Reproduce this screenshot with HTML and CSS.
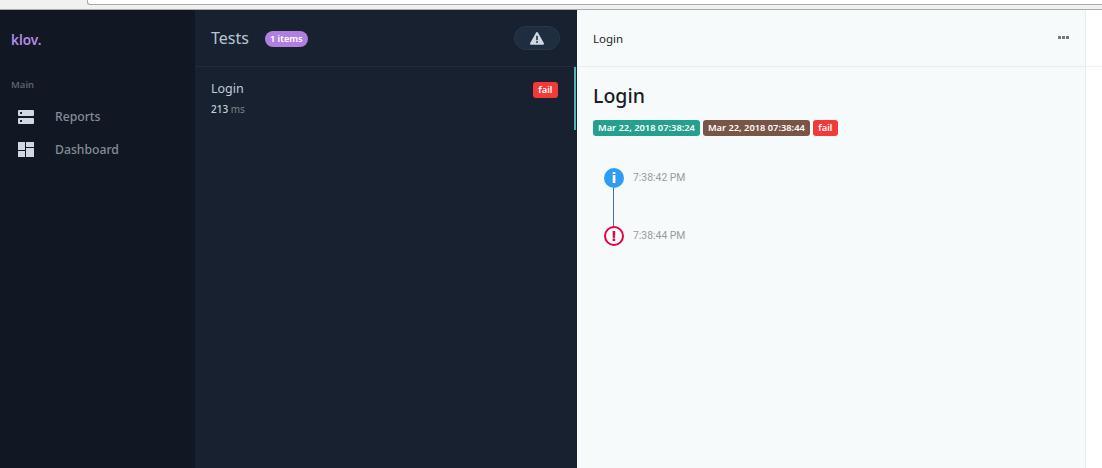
FILE: index.html
```html
<!DOCTYPE html>
<html lang="en">
<head>
    <meta charset="UTF-8">
    <meta name="viewport" content="width=device-width, initial-scale=1.0">
    <title>klov.</title>
    <link rel="stylesheet" href="styles.css">
</head>
<body>
    <div class="browser-bar">
        <div class="address-box"></div>
    </div>
    <div class="app">
        <aside class="sidebar">
            <div class="logo">klov.</div>
            <div class="nav-title">Main</div>
            <a class="nav-item">
                <svg class="nav-icon" width="16" height="14" viewBox="0 0 16 14">
                    <path fill="#cfd8e3" d="M1 0h14a1 1 0 0 1 1 1v4a1 1 0 0 1-1 1H1a1 1 0 0 1-1-1V1a1 1 0 0 1 1-1zm0 8h14a1 1 0 0 1 1 1v4a1 1 0 0 1-1 1H1a1 1 0 0 1-1-1V9a1 1 0 0 1 1-1z"/>
                    <rect x="2" y="2" width="2" height="2" fill="#1b2431"/>
                    <rect x="2" y="10" width="2" height="2" fill="#1b2431"/>
                </svg>
                <span>Reports</span>
            </a>
            <a class="nav-item">
                <svg class="nav-icon" width="16" height="15" viewBox="0 0 16 15">
                    <rect x="0" y="0" width="7" height="8" fill="#cfd8e3"/>
                    <rect x="0" y="9" width="7" height="6" fill="#cfd8e3"/>
                    <rect x="8" y="0" width="8" height="5" fill="#cfd8e3"/>
                    <rect x="8" y="6" width="8" height="9" fill="#cfd8e3"/>
                </svg>
                <span>Dashboard</span>
            </a>
        </aside>

        <section class="tests">
            <header class="tests-head">
                <h2>Tests</h2>
                <span class="count">1 items</span>
                <button class="alert-btn">
                    <svg width="14" height="13" viewBox="0 0 14 13">
                        <path fill="#cfd8e3" d="M7 0c.4 0 .7.2.9.5l5.900 10.600c.4.7-.1 1.600-.9 1.600H1.100c-.8 0-1.300-.9-.9-1.600L6.100.5C6.300.2 6.600 0 7 0z"/>
                        <rect x="6.200" y="3.800" width="1.600" height="4.400" fill="#1f2d40"/>
                        <rect x="6.200" y="9.200" width="1.600" height="1.700" fill="#1f2d40"/>
                    </svg>
                </button>
            </header>
            <div class="test-item">
                <div class="test-info">
                    <div class="test-name">Login</div>
                    <div class="test-time"><b>213</b> ms</div>
                </div>
                <span class="tag tag-fail">fail</span>
            </div>
        </section>

        <main class="detail">
            <header class="detail-head">
                <span>Login</span>
                <span class="dots"><i></i><i></i><i></i></span>
            </header>
            <div class="detail-body">
                <h1>Login</h1>
                <div class="tags">
                    <span class="tag tag-start">Mar 22, 2018 07:38:24</span>
                    <span class="tag tag-end">Mar 22, 2018 07:38:44</span>
                    <span class="tag tag-fail">fail</span>
                </div>
                <ul class="timeline">
                    <li class="event">
                        <span class="dot dot-info">i</span>
                        <span class="event-time">7:38:42 PM</span>
                    </li>
                    <li class="event">
                        <span class="dot dot-error">!</span>
                        <span class="event-time">7:38:44 PM</span>
                    </li>
                </ul>
            </div>
        </main>

        <div class="gutter">
            <div class="gutter-head"></div>
        </div>
    </div>
</body>
</html>
```

FILE: styles.css
```css
* {
    box-sizing: border-box;
}

html, body {
    height: 100%;
}

body {
    margin: 0;
    display: flex;
    flex-direction: column;
    overflow: hidden;
    font-family: "Noto Sans", "Open Sans", sans-serif;
    background-color: #fff;
}

.browser-bar {
    height: 10px;
    flex: none;
    background-color: #f1f1f1;
    border-bottom: 1px solid #a9a9a9;
    padding-left: 87px;
}

.address-box {
    height: 5px;
    background-color: #fff;
    border-left: 1px solid #a9a9a9;
    border-bottom: 1px solid #a9a9a9;
    border-bottom-left-radius: 3px;
}

.app {
    flex: 1;
    display: flex;
    min-height: 0;
}

/* left menu */
.sidebar {
    width: 195px;
    flex: none;
    background-color: #111823;
    padding: 21px 11px 0;
}

.logo {
    color: #b58ae4;
    font-size: 13.500px;
    font-weight: 600;
    line-height: 18px;
}

.nav-title {
    margin-top: 29px;
    color: #5b626d;
    font-size: 9.500px;
    font-weight: 600;
    line-height: 14px;
}

.nav-item {
    display: flex;
    align-items: center;
    height: 33px;
    color: #858c97;
    font-size: 12.200px;
    font-weight: 500;
}

.nav-title + .nav-item {
    margin-top: 8px;
}

.nav-icon {
    margin-left: 7px;
    margin-right: 21px;
}

/* test list */
.tests {
    width: 382px;
    flex: none;
    background-color: #18212f;
}

.tests-head {
    height: 57px;
    display: flex;
    align-items: center;
    padding: 0 17px 0 16px;
    border-bottom: 1px solid #222c3b;
}

.tests-head h2 {
    margin: 0 16px 0 0;
    color: #b8c6d4;
    font-size: 16px;
    font-weight: 400;
}

.count {
    background-color: #b07fe0;
    color: #fff;
    font-size: 9.200px;
    font-weight: 600;
    line-height: 16px;
    padding: 0 5px;
    border-radius: 8px;
    position: relative;
    top: 1px;
}

.alert-btn {
    margin-left: auto;
    width: 46px;
    height: 24px;
    display: flex;
    align-items: center;
    justify-content: center;
    padding: 0;
    background-color: #1f2d40;
    border: 1px solid #2a3749;
    border-radius: 12px;
}

.test-item {
    height: 63px;
    margin-right: 1px;
    display: flex;
    justify-content: space-between;
    align-items: flex-start;
    padding: 14px 16px 0 16px;
    border-right: 2px solid #4fb8b4;
}

.test-item .tag {
    margin-top: 1px;
}

.test-name {
    color: #c0ccd8;
    font-size: 12.500px;
    line-height: 16px;
}

.test-time {
    margin-top: 5px;
    color: #7a818c;
    font-size: 10px;
    line-height: 14px;
}

.test-time b {
    color: #c3cfdb;
    font-weight: 500;
}

.tag {
    display: inline-block;
    color: #fff;
    font-size: 9.300px;
    font-weight: 600;
    line-height: 16px;
    padding: 0 5px;
    border-radius: 3px;
}

.tag-fail {
    background-color: #f33a3a;
    padding: 0 5.500px;
}

.tag-start {
    background-color: #26a08e;
}

.tag-end {
    background-color: #795548;
}

/* detail panel */
.detail {
    flex: 1;
    background-color: #f6fafb;
    color: #1b1e24;
}

.detail-head {
    height: 57px;
    display: flex;
    justify-content: space-between;
    align-items: center;
    padding: 0 16px;
    border-bottom: 1px solid #e8edf0;
    font-size: 11.500px;
}

.dots {
    display: flex;
    gap: 1px;
    margin-bottom: 2px;
}

.dots i {
    width: 3px;
    height: 3px;
    background-color: #777;
}

.detail-body {
    padding: 15px 16px;
}

.detail-body h1 {
    margin: 0;
    font-size: 19.500px;
    font-weight: 500;
    line-height: 28px;
}

.tags {
    display: flex;
    gap: 3px;
    margin-top: 10px;
}

.timeline {
    list-style: none;
    margin: 32px 0 0;
    padding: 0 0 0 11px;
}

.event {
    position: relative;
    display: flex;
    align-items: center;
    height: 20px;
    margin-bottom: 38px;
}

.event:first-child::after {
    content: "";
    position: absolute;
    left: 9px;
    top: 20px;
    width: 1px;
    height: 38px;
    background-color: #4a6f94;
}

.dot {
    width: 20px;
    height: 20px;
    border-radius: 50%;
    display: flex;
    align-items: center;
    justify-content: center;
    font-family: "DejaVu Sans", sans-serif;
    font-size: 14px;
    font-weight: 700;
}

.dot-info {
    background-color: #2f9cf3;
    color: #fff;
}

.dot-error {
    background-color: #fff;
    border: 2.500px solid #e8003f;
    color: #e8003f;
}

.event-time {
    margin-left: 9px;
    color: #979ca1;
    font-family: Roboto, sans-serif;
    font-size: 10.400px;
    font-weight: 400;
    position: relative;
    top: -1px;
}

/* empty strip at the right */
.gutter {
    width: 17px;
    flex: none;
    background-color: #fff;
    border-left: 1px solid #e8edf0;
}

.gutter-head {
    height: 57px;
    border-bottom: 1px solid #eef1f3;
}
```
